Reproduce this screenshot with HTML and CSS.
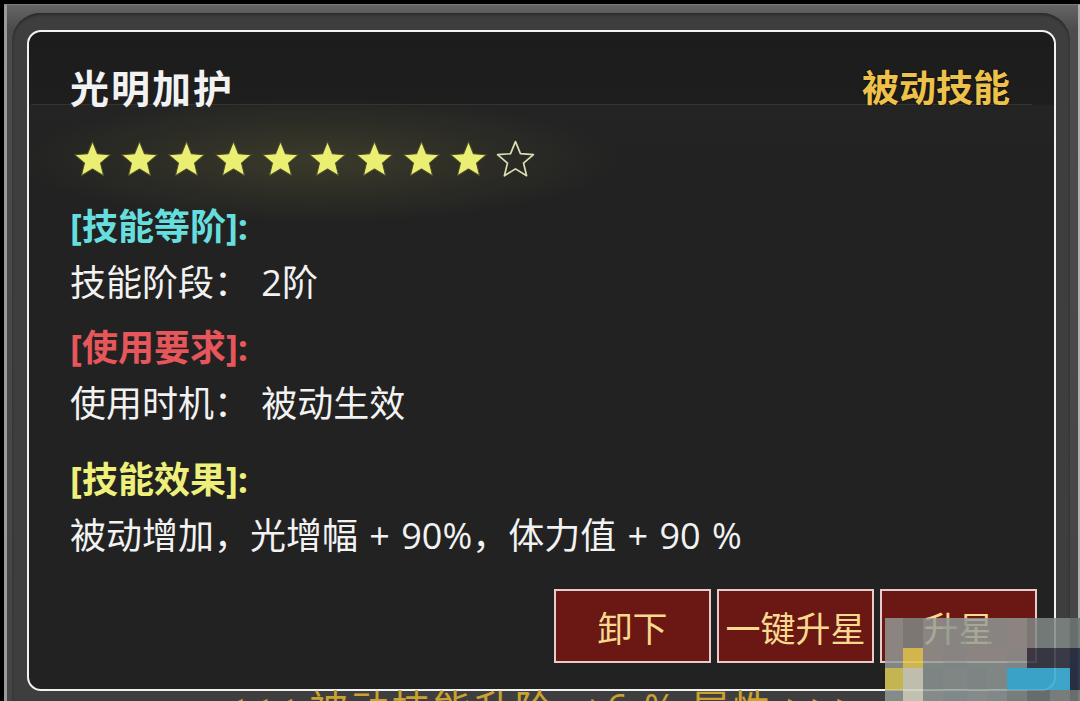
FILE: index.html
```html
<!DOCTYPE html>
<html lang="zh-CN">

<head>
    <meta charset="UTF-8">
    <meta name="viewport" content="width=device-width, initial-scale=1.0">
    <title>光明加护</title>
    <link rel="stylesheet" href="styles.css">
</head>

<body>
    <div class="screen">
        <div class="frame">
            <div class="well">
                <div class="panel">
                    <header>
                        <div class="name">光明加护</div>
                        <div class="kind">被动技能</div>
                    </header>
                    <div class="stars">
                        <svg class="star" viewBox="0 0 24 24"><polygon points="12,1.5 14.9,8.6 22.5,9.2 16.7,14.1 18.5,21.5 12,17.5 5.5,21.5 7.3,14.1 1.5,9.2 9.1,8.6" /></svg>
                        <svg class="star" viewBox="0 0 24 24"><polygon points="12,1.5 14.9,8.6 22.5,9.2 16.7,14.1 18.5,21.5 12,17.5 5.5,21.5 7.3,14.1 1.5,9.2 9.1,8.6" /></svg>
                        <svg class="star" viewBox="0 0 24 24"><polygon points="12,1.5 14.9,8.6 22.5,9.2 16.7,14.1 18.5,21.5 12,17.5 5.5,21.5 7.3,14.1 1.5,9.2 9.1,8.6" /></svg>
                        <svg class="star" viewBox="0 0 24 24"><polygon points="12,1.5 14.9,8.6 22.5,9.2 16.7,14.1 18.5,21.5 12,17.5 5.5,21.5 7.3,14.1 1.5,9.2 9.1,8.6" /></svg>
                        <svg class="star" viewBox="0 0 24 24"><polygon points="12,1.5 14.9,8.6 22.5,9.2 16.7,14.1 18.5,21.5 12,17.5 5.5,21.5 7.3,14.1 1.5,9.2 9.1,8.6" /></svg>
                        <svg class="star" viewBox="0 0 24 24"><polygon points="12,1.5 14.9,8.6 22.5,9.2 16.7,14.1 18.5,21.5 12,17.5 5.5,21.5 7.3,14.1 1.5,9.2 9.1,8.6" /></svg>
                        <svg class="star" viewBox="0 0 24 24"><polygon points="12,1.5 14.9,8.6 22.5,9.2 16.7,14.1 18.5,21.5 12,17.5 5.5,21.5 7.3,14.1 1.5,9.2 9.1,8.6" /></svg>
                        <svg class="star" viewBox="0 0 24 24"><polygon points="12,1.5 14.9,8.6 22.5,9.2 16.7,14.1 18.5,21.5 12,17.5 5.5,21.5 7.3,14.1 1.5,9.2 9.1,8.6" /></svg>
                        <svg class="star" viewBox="0 0 24 24"><polygon points="12,1.5 14.9,8.6 22.5,9.2 16.7,14.1 18.5,21.5 12,17.5 5.5,21.5 7.3,14.1 1.5,9.2 9.1,8.6" /></svg>
                        <svg class="star empty" viewBox="0 0 24 24"><polygon points="12,1.5 14.9,8.6 22.5,9.2 16.7,14.1 18.5,21.5 12,17.5 5.5,21.5 7.3,14.1 1.5,9.2 9.1,8.6" /></svg>
                    </div>

                    <div class="block first">
                        <div class="label cyan">[技能等阶]:</div>
                        <div class="line">技能阶段： 2阶</div>
                    </div>
                    <div class="block">
                        <div class="label red">[使用要求]:</div>
                        <div class="line">使用时机： 被动生效</div>
                    </div>
                    <div class="block third">
                        <div class="label yellow">[技能效果]:</div>
                        <div class="line">被动增加，光增幅 + 90%，体力值 + 90 %</div>
                    </div>

                    <footer>
                        <button>卸下</button>
                        <button>一键升星</button>
                        <button>升星</button>
                    </footer>
                </div>
                <div class="next">&lt;&lt;&lt; 被动技能升阶: +6 % 属性 &gt;&gt;&gt;</div>
            </div>
        </div>

        <!-- pixelated corner -->
        <div class="mosaic">
            <i class="g1"></i><i class="g2"></i><i class="g1"></i><i class="g3"></i><i class="g1"></i><i class="g3"></i><i class="g1"></i><i class="g2"></i><i class="g2"></i><i class="g4"></i>
            <i class="g1"></i><i class="y1"></i><i class="g1"></i><i class="g3"></i><i class="g1"></i><i class="g1"></i><i class="g3"></i><i class="n1"></i><i class="n1"></i><i class="n2"></i>
            <i class="y2"></i><i class="p1"></i><i class="g3"></i><i class="g1"></i><i class="g3"></i><i class="g1"></i><i class="c1"></i><i class="c1"></i><i class="c1"></i><i class="n2"></i>
            <i class="g1"></i><i class="p1"></i><i class="g1"></i><i class="g3"></i><i class="g1"></i><i class="g3"></i><i class="g2"></i><i class="g4"></i><i class="g2"></i><i class="g4"></i>
        </div>
    </div>
</body>

</html>
```

FILE: styles.css
```css
html,
body {
    margin: 0;
    width: 100%;
    height: 100%;
}

body {
    background: #000;
    font-family: "Open Sans", "Noto Sans CJK SC", sans-serif;
    overflow: hidden;
}

.screen {
    position: relative;
    width: 1080px;
    height: 701px;
    overflow: hidden;
    padding: 4px 0 0 4px;
    box-sizing: border-box;
}

.frame {
    height: 100%;
    border-left: 3px solid #9a9a9a;
    border-top: 1px solid #7a7a7a;
    border-right: 2px solid #b0b0b0;
    background: linear-gradient(#656565, #4c4c4c 24px, #444);
    padding: 8px 8px 0 5px;
}

.well {
    height: 100%;
    background: #3e3e3e;
    border-radius: 28px 28px 0 0;
    padding: 17px 14px 0 15px;
    box-shadow: inset 0 2px 3px rgba(0, 0, 0, 0.35);
}

.panel {
    height: 661px;
    box-sizing: border-box;
    border: 2px solid #f2f2f2;
    border-radius: 14px;
    background:
        radial-gradient(ellipse 300px 62px at 290px 128px, rgba(95, 95, 55, 0.4), transparent),
        linear-gradient(#1c1c1c, #1e1e1e 72px, #242424 74px, #222 130px);
    padding: 0 44px 0 41px;
    display: flex;
    flex-direction: column;
    color: #f2f2f2;
}

header {
    display: flex;
    justify-content: space-between;
    align-items: center;
    height: 72px;
    margin: 0 -22px 0 -39px;
    padding: 0 22px 0 39px;
    border-bottom: 1px solid #36352e;
    font-family: "Noto Sans CJK SC", sans-serif;
}

.name {
    font-size: 39px;
    font-weight: bold;
    letter-spacing: 2px;
    padding-top: 36px;
}

.kind {
    font-size: 37px;
    font-weight: bold;
    color: #eec24a;
    text-shadow: 0 0 2px #000;
    padding-top: 36px;
}

.stars {
    display: flex;
    gap: 6px;
    margin-top: 34px;
    margin-left: 2px;
}

.star {
    width: 41px;
    height: 41px;
}

.star polygon {
    fill: #eaef74;
    stroke: #4a4a26;
    stroke-width: 0.6;
    stroke-linejoin: round;
}

.star.empty polygon {
    fill: none;
    stroke: #dcdcb4;
    stroke-width: 1;
}

.block {
    margin-top: 9px;
    font-size: 36px;
    line-height: 56px;
}

.block.first {
    margin-top: 19px;
}

.block.third {
    margin-top: 20px;
}

.line {
    word-spacing: 2px;
}

.label {
    font-weight: bold;
}

.cyan {
    color: #66dede;
}

.red {
    color: #e6565a;
}

.yellow {
    color: #eef07a;
}

footer {
    margin-top: auto;
    margin-bottom: 26px;
    margin-right: -27px;
    display: flex;
    justify-content: flex-end;
    gap: 6px;
}

button {
    width: 157px;
    height: 74px;
    border: 2px solid #e8cccc;
    background: #6b1713;
    color: #f7da90;
    font-family: "Noto Sans CJK SC", sans-serif;
    font-size: 35px;
    padding: 0;
}

.next {
    text-align: center;
    color: #c9a230;
    font-size: 38px;
    letter-spacing: 3px;
    line-height: 30px;
    margin-top: 1px;
}

.mosaic {
    position: absolute;
    left: 885px;
    top: 618px;
    width: 195px;
    height: 83px;
    display: grid;
    grid-template-columns: 18px 20px 20px 24px 20px 20px 20px 23px 20px 10px;
    grid-template-rows: 30px 20px 22px 11px;
}

.mosaic i {
    display: block;
}

.g1 {
    background: rgba(148, 156, 154, 0.82);
}

.g2 {
    background: rgba(128, 136, 134, 0.85);
}

.g3 {
    background: rgba(140, 150, 148, 0.86);
}

.g4 {
    background: rgba(110, 118, 118, 0.85);
}

.y1 {
    background: rgba(222, 198, 86, 0.9);
}

.y2 {
    background: rgba(214, 196, 88, 0.9);
}

.p1 {
    background: rgba(208, 206, 186, 0.9);
}

.n1 {
    background: rgba(58, 58, 72, 0.9);
}

.n2 {
    background: rgba(38, 46, 66, 0.9);
}

.c1 {
    background: rgba(62, 174, 214, 0.92);
}
```
